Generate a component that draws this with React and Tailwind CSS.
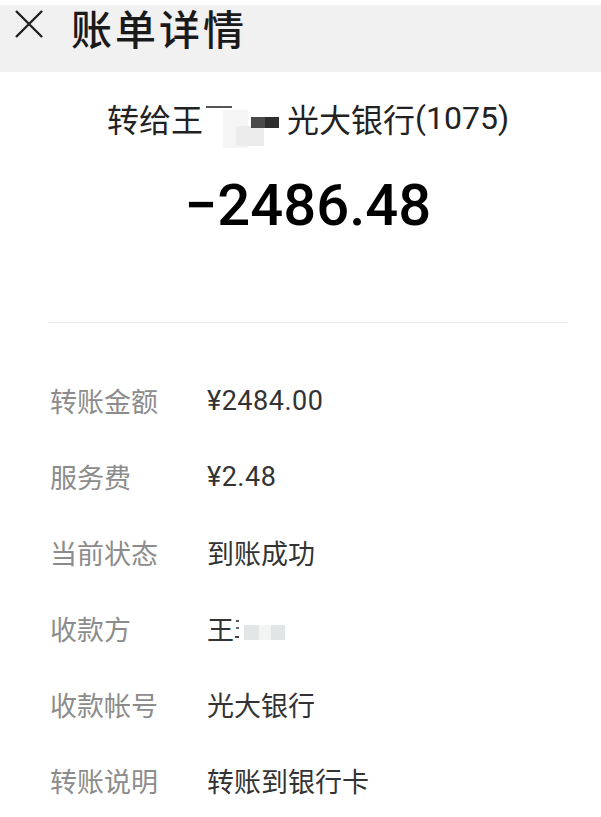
const rows = [
  { label: '转账金额', value: '¥2484.00', latin: true },
  { label: '服务费', value: '¥2.48', latin: true },
  { label: '当前状态', value: '到账成功' },
  { label: '收款方', value: 'payee' },
  { label: '收款帐号', value: '光大银行' },
  { label: '转账说明', value: '转账到银行卡' },
];

const cjk = { fontFamily: '"Noto Sans CJK SC", "Noto Sans", sans-serif' };
const roboto = { fontFamily: 'Roboto, "Noto Sans CJK SC", sans-serif' };

function Payee() {
  // name partly masked in the screenshot
  return (
    <span className="inline-flex items-center">
      <span>王</span>
      <span className="relative inline-block w-[46px] h-[27px]">
        <span className="absolute left-[2px] top-[4px] w-[3px] h-[2px] bg-[#555]" />
        <span className="absolute left-[2px] top-[11px] w-[3px] h-[2px] bg-[#666]" />
        <span className="absolute left-[1px] top-[20px] w-[4px] h-[2px] bg-[#444]" />
        <span className="absolute left-[10px] top-[9px] w-[15px] h-[15px] bg-[#e3e6e6]" />
        <span className="absolute left-[25px] top-[9px] w-[12px] h-[15px] bg-[#f3f4f4]" />
        <span className="absolute left-[37px] top-[9px] w-[14px] h-[15px] bg-[#e2e5e5]" />
      </span>
    </span>
  );
}

export default function App() {
  return (
    <div className="w-[601px] h-[817px] bg-white overflow-hidden text-[#222]" style={cjk}>
      <div className="h-[5px] bg-white" />
      <div className="h-[67px] bg-[#f1f1f1] flex items-start">
        <svg className="ml-[15px] mt-[5px] w-[28px] h-[28px]" viewBox="0 0 28 28" fill="none" stroke="#222" strokeWidth="2.4">
          <path d="M1 1 L27 27 M27 1 L1 27" />
        </svg>
        <h1 className="ml-[28px] text-[41px] leading-[44px] tracking-[3px] text-[#1a1a1a] font-medium">账单详情</h1>
      </div>

      <div className="flex flex-col items-center pl-[15px]">
        <p className="mt-[24px] text-[32px] leading-[44px] text-[#222] flex items-center">
          <span>转给王</span>
          <span className="relative inline-block w-[84px] h-[44px]">
            <span className="absolute left-[3px] top-[10px] w-[26px] h-[2px] bg-[#555]" />
            <span className="absolute left-[20px] top-[14px] w-[25px] h-[38px] bg-[#f5f5f5]" />
            <span className="absolute left-[33px] top-[30px] w-[28px] h-[20px] bg-[#ececec]" />
            <span className="absolute left-[48px] top-[21px] w-[14px] h-[11px] bg-[#4a4a4a]" />
            <span className="absolute left-[62px] top-[21px] w-[14px] h-[11px] bg-[#2e2e2e]" />
          </span>
          <span>光大银行</span>
          <span className="text-[32px]" style={roboto}>(1075)</span>
        </p>
        <p className="mt-[30px] text-[58px] leading-[70px] font-medium text-black" style={roboto}>
          −2486.48
        </p>
      </div>

      <div className="ml-[48px] mr-[33px] mt-[82px] h-px bg-[#ececec]" />

      <div className="mt-[40px] flex flex-col">
        {rows.map((r) => (
          <div key={r.label} className="h-[76px] flex items-center pl-[50px]">
            <span className="w-[157px] text-[27px] text-[#8c8c8c]">{r.label}</span>
            {r.latin ? (
              <span className="text-[27px] tracking-[0.5px] text-[#333]" style={roboto}>{r.value}</span>
            ) : (
              <span className="text-[27px] text-[#333]">
                {r.value === 'payee' ? <Payee /> : r.value}
              </span>
            )}
          </div>
        ))}
      </div>
    </div>
  );
}
